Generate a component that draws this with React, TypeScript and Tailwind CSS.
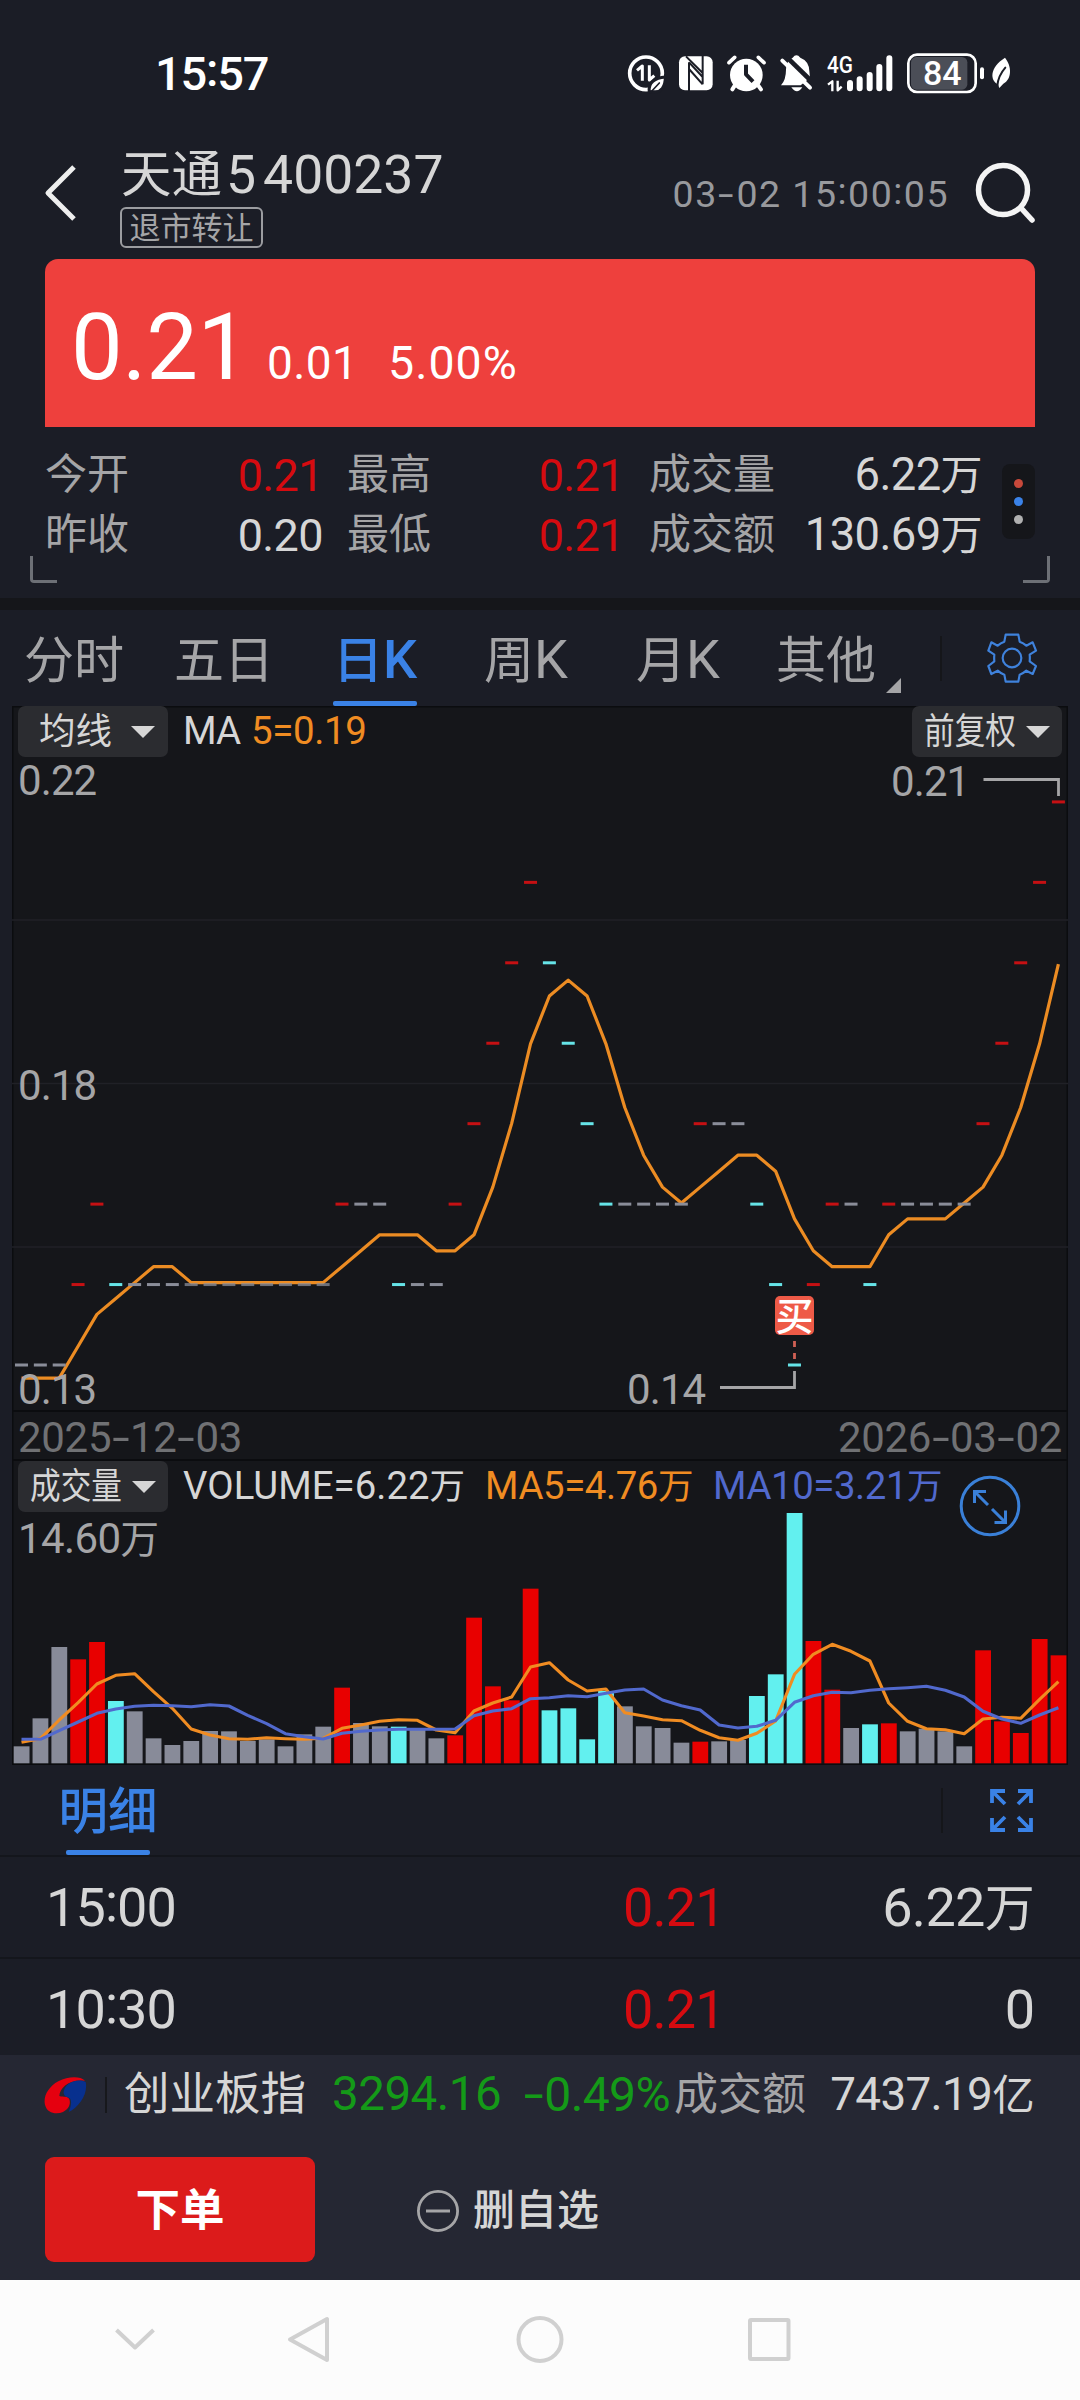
import React from "react";

/* ---------- text ---------- */

/** Mixed Latin / Chinese label: digits run slightly larger than the ideographs, colons are centred. */
function T({ s, className = "" }: { s: string; className?: string }) {
  const hasCjk = /[\u4e00-\u9fff]/.test(s);
  const runs = s.match(/[\u4e00-\u9fff]+|:|-|[^\u4e00-\u9fff:-]+/g) ?? [];
  return (
    <span className={"block whitespace-pre leading-none " + className}>
      {runs.map((r, i) => {
        if (r === ":")
          return (
            <span key={i} className="relative -top-[0.085em]">
              :
            </span>
          );
        if (r === "-")
          return (
            <span key={i} className="mx-[0.09em] inline-block scale-x-150">
              -
            </span>
          );
        if (/[\u4e00-\u9fff]/.test(r)) return <span key={i}>{r}</span>;
        return (
          <span key={i} className={hasCjk ? "text-[1.08em]" : ""}>
            {r}
          </span>
        );
      })}
    </span>
  );
}

/* ---------- status bar ---------- */

function StatusIcons() {
  const bg = "#1b1d26";
  return (
    <svg className="ml-[359px] h-[63px] w-[386px] shrink-0 overflow-visible" viewBox="79 35 1158 189" fill="none" stroke="#fff" strokeLinecap="round" strokeLinejoin="round">
      <circle cx="136" cy="129" r="49" strokeWidth="11" />
      <path d="M109 120L125 107V151M146 105V149L161 136" strokeWidth="9" strokeLinecap="butt" />
      <path d="M146 184C142 158 162 142 194 140C194 168 182 188 158 184Z" fill="#fff" stroke={bg} strokeWidth="9" />
      <path d="M148 188L176 158" stroke={bg} strokeWidth="5" />

      <rect x="235" y="78" width="101" height="102" rx="18" fill="#fff" stroke="none" />
      <path d="M265 96V184M306 74V162M256 78L306 128M265 96L306 140M265 116L306 162" stroke={bg} strokeWidth="6" strokeLinecap="butt" />

      <circle cx="437" cy="134" r="49" fill="#fff" stroke="none" />
      <path d="M385 97L402 81M473 81L490 97" strokeWidth="11" />
      <path d="M402 166L395 177M473 166L481 177" strokeWidth="12" />
      <path d="M436 103V132L457 154" stroke={bg} strokeWidth="12" strokeLinecap="butt" />

      <path d="M576 82Q587 68 599 82Q625 92 626 122L628 142L600 165H541Q556 148 556 118Q556 92 576 82Z" fill="#fff" stroke="none" />
      <path d="M556 78L644 164" stroke={bg} strokeWidth="14" strokeLinecap="butt" />
      <path d="M545 91L628 172" strokeWidth="12" />
      <path d="M572 171H605Q589 195 572 171Z" fill="#fff" stroke="none" />

      <text x="679" y="129" textLength="78" lengthAdjust="spacingAndGlyphs" fontSize="73" fontWeight="500" fill="#fff" stroke="none">
        4G
      </text>
      <path d="M682 163L695 153V183M711 151V180L723 169" strokeWidth="7" strokeLinecap="butt" />
      <path d="M748 158V174M777 147V174M807 134V174M836 110V174M866 84V174" strokeWidth="18" />

      <rect x="931" y="80" width="169" height="98" rx="16" fill="#4b4e57" stroke="none" />
      <rect x="923" y="73" width="202" height="112" rx="26" strokeWidth="8" />
      <text x="1025" y="165" textAnchor="middle" fontSize="102" fontWeight="500" fill="#fff" stroke="none">
        84
      </text>
      <path d="M1144 117V141" strokeWidth="12" />
      <path d="M1213 82C1234 108 1234 146 1208 160L1196 173L1192 162C1168 150 1166 112 1213 82Z" fill="#fff" stroke="none" />
      <path d="M1214 112C1200 128 1192 144 1190 166" stroke={bg} strokeWidth="6" />
    </svg>
  );
}

/* ---------- chart data ---------- */

const UP = "#c51013";
const DOWN = "#66e4e8";
const FLAT = "#8a8d99";

const levels = [
  14, 14, 14, 15, 16, 15, 15, 15, 15, 15, 15, 15, 15, 15, 15, 15, 15, 16, 16, 16, 15, 15, 15, 16, 17, 18, 19, 20, 19, 18, 17, 16, 16, 16,
  16, 16, 17, 17, 17, 16, 15, 14, 15, 16, 16, 15, 16, 16, 16, 16, 16, 17, 18, 19, 20, 21,
];
const barTops = [
  1039, 955, 741, 778, 726, 903, 934, 1015, 1035, 1023, 993, 994, 1023, 1018, 1039, 1003, 980, 863, 969, 979, 980, 989, 1015, 1006, 653, 859,
  901, 566, 931, 925, 1018, 873, 919, 979, 984, 1028, 1025, 1024, 1020, 888, 823, 339, 723, 869, 984, 973, 970, 994, 986, 994, 1039, 751, 964,
  999, 717, 766,
];
const volMa5 = [
  1027, 1016, 960, 908, 852, 826, 821, 875, 925, 987, 1005, 1016, 1018, 1013, 1016, 1018, 1015, 985, 975, 964, 959, 961, 990, 998, 933, 909,
  891, 801, 788, 840, 873, 867, 938, 948, 959, 962, 991, 1013, 1021, 1000, 963, 823, 763, 733, 754, 783, 909, 964, 986, 989, 1001, 957, 952,
  955, 898, 845,
];
const volMa10 = [
  1018, 1018, 992, 966, 940, 927, 919, 916, 917, 920, 914, 918, 946, 971, 1001, 1010, 1017, 1000, 994, 990, 988, 988, 988, 987, 947, 933, 926,
  896, 893, 887, 890, 880, 870, 867, 900, 917, 930, 975, 984, 979, 961, 907, 887, 877, 878, 871, 866, 863, 859, 871, 891, 934, 957, 970, 945,
  923,
];

const cx = (i: number) => 21.5 + i * 18.853;
const dir = (i: number) => (i === 0 ? 0 : Math.sign(levels[i] - levels[i - 1]));
const markY = (v: number) => 1365 - (v - 14) * 80.44;
const ma5 = levels.map((_, i) => {
  if (i < 3) return 13.8;
  if (i === 3) return 14.2;
  return levels.slice(i - 4, i + 1).reduce((a, b) => a + b, 0) / 5;
});
const maPoints = ma5.map((v, i) => `${cx(i).toFixed(1)},${(1282.6 - (v - 15) * 79.6).toFixed(1)}`).join(" ");
const volPoints = (a: number[]) => a.map((v, i) => `${cx(i).toFixed(1)},${(1400 + v / 3).toFixed(1)}`).join(" ");

function PriceChart() {
  return (
    <svg className="block h-[653px] w-full overflow-visible" viewBox="12 757 1056 653">
      {[920, 1083.5, 1247].map((y) => (
        <line key={y} x1="12" x2="1068" y1={y} y2={y} stroke="#202127" strokeWidth="1.5" />
      ))}
      <polyline points={maPoints} fill="none" stroke="#ec8c23" strokeWidth="3.2" strokeLinejoin="round" />
      {levels.map((v, i) => (
        <rect
          key={i}
          x={cx(i) - 6.5}
          y={markY(v) - 1.5}
          width="13"
          height="3"
          fill={dir(i) > 0 ? UP : dir(i) < 0 ? DOWN : FLAT}
          opacity={i > 8 && i < 17 ? 0.75 : 1}
        />
      ))}
      <g fill="#a5a5a7" fontSize="42" letterSpacing="-0.9">
        <text x="18" y="795">0.22</text>
        <text x="18" y="1099.5">0.18</text>
        <text x="18" y="1404">0.13</text>
        <text x="891" y="796">0.21</text>
        <text x="627" y="1404">0.14</text>
      </g>
      <path d="M983.5 779.5H1058.5V796M720 1387.5H794.5V1371" fill="none" stroke="#a5a5a7" strokeWidth="2.8" />
      <rect x="775" y="1296" width="39" height="39" rx="5" fill="#ee5a47" />
      <text x="794.5" y="1330" textAnchor="middle" fontSize="38" fontWeight="500" fill="#fff">
        买
      </text>
      <path d="M794.5 1341V1347M794.5 1353V1359" stroke="#cf6055" strokeWidth="2.8" />
    </svg>
  );
}

function VolumeChart() {
  return (
    <svg className="block h-[253px] w-full" viewBox="12 1512 1056 253">
      <text x="18" y="1552.5" fontSize="42" letterSpacing="-0.6" fill="#a5a5a7">
        14.60<tspan fontSize="38.5">万</tspan>
      </text>
      {barTops.map((v, i) => (
        <rect
          key={i}
          x={cx(i) - 7.8}
          y={1400 + v / 3}
          width="15.8"
          height={363.3 - v / 3}
          fill={dir(i) > 0 ? "#e80000" : dir(i) < 0 ? "#62f0ef" : "#888b99"}
        />
      ))}
      <polyline points={volPoints(volMa5)} fill="none" stroke="#f08c22" strokeWidth="3.1" strokeLinejoin="round" />
      <polyline points={volPoints(volMa10)} fill="none" stroke="#5169cd" strokeWidth="3.1" strokeLinejoin="round" />
    </svg>
  );
}

/* ---------- small parts ---------- */

function PickButton({ label, narrow, className = "" }: { label: string; narrow?: boolean; className?: string }) {
  return (
    <div className={"flex h-[51px] w-[150px] shrink-0 items-center rounded-[7px] bg-[#2b2c30] pt-[1px] text-[#d6d6d6] " + className}>
      {narrow ? (
        <div className="ml-[12px] w-[93px]">
          <T s={label} className="w-[108px] origin-left scale-x-[0.84] text-[36.5px]" />
        </div>
      ) : (
        <T s={label} className="ml-[21px] mr-[10px] text-[36.5px]" />
      )}
      <svg className="ml-[9px] h-[12px] w-[24px]" viewBox="0 0 24 12">
        <path d="M0 0H24L12 12Z" fill="#d6d6d6" />
      </svg>
    </div>
  );
}

function Gear() {
  return (
    <svg className="ml-[44px] h-[52px] w-[52px]" viewBox="345 36 156 156" fill="none" stroke="#3f82dc" strokeWidth="6.5" strokeLinejoin="round">
      <path d="M404 44H442L446 65Q457 69 466 77L485 67L495 92L476 104Q477 114 476 124L495 138L485 162L466 152Q457 160 446 164L442 185H404L400 164Q389 160 380 152L361 162L352 138L370 124Q369 114 370 104L352 92L361 67L380 77Q389 69 400 65Z" />
      <circle cx="423" cy="114" r="28" />
    </svg>
  );
}

function Logo() {
  return (
    <svg className="ml-[44px] h-[38px] w-[43px]" viewBox="43 38 129 114">
      <path d="M166 52C152 38 116 38 86 54C56 70 40 100 46 124C52 150 80 154 100 146C117 138 124 122 119 108C115 97 102 102 89 98C90 74 118 46 166 52Z" fill="#e5000f" />
      <path d="M168 56C142 44 112 58 104 78C98 92 105 100 114 102C128 105 126 124 117 146C148 132 176 92 168 56Z" fill="#08308e" />
    </svg>
  );
}

function StatRow({ items }: { items: [string, string, string][] }) {
  const widths = ["ml-[45px] w-[278px]", "ml-[24px] w-[277px]", "ml-[25px] w-[333px]"];
  return (
    <div className="flex h-[60px] items-center">
      {items.map(([label, value, color], i) => (
        <div key={label} className={"flex items-center justify-between " + widths[i]}>
          <T s={label} className="text-[42px] text-[#a5a5a7]" />
          <T s={value} className={(/万/.test(value) ? "text-[42px] tracking-[-0.6px] " : "text-[45px] tracking-[-0.6px] ") + color} />
        </div>
      ))}
    </div>
  );
}

/* ---------- page ---------- */

const RED = "text-[#d60b10]";
const LIGHT = "text-[#d6d6d6]";

export default function App() {
  return (
    <div className="flex h-[2400px] w-[1080px] flex-col overflow-hidden bg-[#1b1d26] font-[Roboto,'Noto_Sans_CJK_SC',sans-serif] text-[#d6d6d6]">
      {/* status bar */}
      <div className="flex h-[146px] shrink-0 items-center">
        <T s="15:57" className="ml-[155px] w-[113px] text-[47px] font-medium tracking-[-1.2px] text-white" />
        <StatusIcons />
      </div>

      {/* header */}
      <div className="flex h-[113px] shrink-0">
        <svg className="ml-[41px] mt-[18px] h-[58px] w-[38px]" viewBox="0 0 38 58" fill="none" stroke="#eee" strokeWidth="5">
          <path d="M33 3L7 29L33 55" strokeLinejoin="round" />
        </svg>
        <div className="ml-[41px] w-[400px]">
          <div className="flex h-[56px] items-center pt-[2px]">
            <T s="天通" className="ml-[1px] text-[50.5px]" />
            <T s="5" className="ml-[4px] text-[53.5px]" />
            <T s="400237" className="ml-[7px] text-[53.5px]" />
          </div>
          <div className="mt-[5px] flex h-[41px] w-[143px] items-center justify-center rounded-[6px] border-2 border-[#9b9ca0] pt-[1px]">
            <T s="退市转让" className="text-[31px] text-[#a5a5a7]" />
          </div>
        </div>
        <div className="ml-auto mt-[21px] flex h-[56px] items-center">
          <T s="03-02 15:00:05" className="text-[37.5px] tracking-[1.5px] text-[#98999d]" />
        </div>
        <svg className="ml-[21px] mr-[42px] mt-[13px] h-[68px] w-[68px]" viewBox="0 0 68 68" fill="none" stroke="#f4f4f4" strokeWidth="5.5" strokeLinecap="round">
          <circle cx="33" cy="31" r="24.5" />
          <path d="M51 49L62 61" />
        </svg>
      </div>

      {/* price card */}
      <div className="mx-[45px] flex h-[168px] shrink-0 items-baseline rounded-t-[13px] bg-[#ee403d] pt-[43px] text-white">
        <T s="0.21" className="ml-[26px] w-[167px] text-[92px] tracking-[-0.4px]" />
        <T s="0.01" className="ml-[29px] w-[90px] text-[46px] tracking-[0.4px]" />
        <T s="5.00%" className="ml-[31px] text-[46.5px] tracking-[1px]" />
      </div>

      {/* summary */}
      <div className="relative h-[171px] shrink-0 pt-[18px]">
        <div className="flex">
          <div>
            <StatRow
              items={[
                ["今开", "0.21", RED],
                ["最高", "0.21", RED],
                ["成交量", "6.22万", LIGHT],
              ]}
            />
            <StatRow
              items={[
                ["昨收", "0.20", LIGHT],
                ["最低", "0.21", RED],
                ["成交额", "130.69万", LIGHT],
              ]}
            />
          </div>
          <div className="ml-[20px] mt-[19px] flex h-[75px] w-[33px] flex-col items-center justify-center gap-[9px] rounded-[8px] bg-[#15161a]">
            <div className="size-[9px] rounded-full bg-[#c8493b]" />
            <div className="size-[9px] rounded-full bg-[#3a82e8]" />
            <div className="size-[9px] rounded-full bg-[#b0b0b0]" />
          </div>
        </div>
        <div className="absolute left-[30px] top-[129px] h-[27px] w-[27px] rounded-bl-[4px] border-b-[3px] border-l-[3px] border-[#6d7076]" />
        <div className="absolute right-[30px] top-[129px] h-[27px] w-[27px] rounded-br-[4px] border-b-[3px] border-r-[3px] border-[#6d7076]" />
      </div>
      <div className="h-[12px] shrink-0 bg-[#15161a]" />

      {/* period tabs */}
      <div className="flex h-[96px] shrink-0 items-center text-[50px] text-[#a5a5a7]">
        <T s="分时" className="ml-[24px] mt-[5px] w-[101px]" />
        <T s="五日" className="ml-[49px] mt-[5px] w-[101px]" />
        <div className="relative ml-[58px] flex h-full w-[84px] items-center justify-center text-[#3a82e6]">
          <T s="日K" className="mt-[4px] font-medium" />
          <div className="absolute bottom-0 h-[5px] w-[84px] rounded-[2px] bg-[#3a82e6]" />
        </div>
        <T s="周K" className="ml-[67px] mt-[4px] w-[90px]" />
        <T s="月K" className="ml-[62px] mt-[4px] w-[90px]" />
        <T s="其他" className="ml-[50px] mt-[5px] w-[101px]" />
        <svg className="ml-[9px] mt-[54px] h-[15px] w-[15px]" viewBox="0 0 15 15">
          <path d="M15 0V15H0Z" fill="#a5a5a7" />
        </svg>
        <div className="ml-[39px] h-[45px] w-[2px] bg-[#15161a]" />
        <Gear />
      </div>

      {/* charts */}
      <div className="relative mx-[12px] h-[1059px] shrink-0 bg-[#15161a] shadow-[inset_0_0_0_1.5px_#0b0c0f]">
        <div className="flex h-[51px] items-center">
          <PickButton label="均线" className="ml-[6px]" />
          <T s="MA" className="ml-[15px] w-[59px] text-[38.5px] tracking-[-1px]" />
          <T s="5=0.19" className="ml-[9px] mt-[-1px] text-[38.5px] tracking-[-0.4px] text-[#f08c22]" />
          <PickButton label="前复权" narrow className="ml-auto mr-[6px]" />
        </div>
        <PriceChart />
        <div className="flex h-[51px] items-center justify-between border-y-2 border-[#0b0c0f] pl-[6px] pr-[6px] pt-[4px] text-[42px] tracking-[-0.3px] text-[#707174]">
          <T s="2025-12-03" />
          <T s="2026-03-02" />
        </div>
        <div className="flex h-[51px] items-center">
          <PickButton label="成交量" narrow className="ml-[6px]" />
          <T s="VOLUME=6.22万" className="ml-[15px] w-[282px] text-[35.5px] tracking-[0.05px]" />
          <T s="MA5=4.76万" className="ml-[20px] w-[208px] text-[35.5px] tracking-[-0.4px] text-[#f08c22]" />
          <T s="MA10=3.21万" className="ml-[20px] text-[35.5px] tracking-[-0.4px] text-[#5169cd]" />
        </div>
        <VolumeChart />
        <svg className="absolute right-[46px] top-[768px] h-[64px] w-[64px]" viewBox="0 0 64 64" fill="none" stroke="#3a80d8" strokeWidth="3">
          <circle cx="32" cy="32" r="28.8" />
          <path d="M16.5 29V17.5H28M17 18L30 31M34 35L47 48M36.5 48.5H47.5V36.5" />
        </svg>
      </div>

      {/* trade details */}
      <div className="flex h-[92px] shrink-0 items-center border-b-2 border-[#14161c]">
        <div className="relative ml-[59px] flex h-full w-[98px] items-center justify-center text-[#3a82e6]">
          <T s="明细" className="mt-[5px] text-[49.5px] font-medium" />
          <div className="absolute bottom-0 h-[5px] w-[84px] rounded-[2px] bg-[#3a82e6]" />
        </div>
        <div className="ml-[784px] h-[45px] w-[2px] bg-[#15161a]" />
        <svg className="ml-[45px] h-[46px] w-[46px]" viewBox="0 0 46 46" fill="none" stroke="#3a82e6" strokeWidth="3.8">
          <path d="M4 16V4H17M4 4L17 17M30 4H43V16M43 4L30 17M4 31V43H17M4 43L17 30M30 43H43V31M43 43L30 30" />
        </svg>
      </div>
      <div className="flex h-[102px] shrink-0 items-center border-b-2 border-[#14161c] pt-[2px]">
        <T s="15:00" className="ml-[46px] w-[577px] text-[54px] tracking-[-0.9px]" />
        <T s="0.21" className="text-[54px] tracking-[-0.9px] text-[#d60b10]" />
        <T s="6.22万" className="ml-auto mr-[46px] text-[50px] tracking-[-0.7px]" />
      </div>
      <div className="flex h-[96px] shrink-0 items-center pt-[6px]">
        <T s="10:30" className="ml-[46px] w-[577px] text-[54px] tracking-[-0.9px]" />
        <T s="0.21" className="text-[54px] tracking-[-0.9px] text-[#d60b10]" />
        <T s="0" className="ml-auto mr-[45px] text-[54px]" />
      </div>

      {/* bottom panel */}
      <div className="h-[225px] shrink-0 bg-[#252733]">
        <div className="flex h-[78px] items-center pt-[1px]">
          <Logo />
          <div className="ml-[18px] h-[36px] w-[2px] bg-[#17181c]" />
          <T s="创业板指" className="ml-[17px] w-[182px] text-[45.5px]" />
          <T s="3294.16" className="ml-[26px] w-[167px] text-[47.5px] tracking-[-0.5px] text-[#149a18]" />
          <T s="-0.49%" className="ml-[24px] w-[149px] text-[48px] tracking-[-0.6px] text-[#149a18]" />
          <T s="成交额" className="ml-[2px] w-[132px] text-[44px] text-[#a5a5a7]" />
          <T s="7437.19亿" className="ml-auto mr-[46px] text-[42.5px] tracking-[-0.7px]" />
        </div>
        <div className="mt-[24px] flex h-[105px] items-center">
          <div className="ml-[45px] flex h-[105px] w-[270px] items-center justify-center rounded-[9px] bg-[#dc1b1b] pt-[3px] text-white">
            <T s="下单" className="text-[44.5px] font-bold" />
          </div>
          <svg className="ml-[101px] mt-[2px] h-[44px] w-[44px]" viewBox="0 0 44 44" fill="none" stroke="#a5a5a7" strokeWidth="2.8">
            <circle cx="22" cy="22" r="19.6" />
            <path d="M10 22H34" strokeWidth="3" />
          </svg>
          <T s="删自选" className="ml-[13px] mt-[3px] text-[42px] font-medium" />
        </div>
      </div>

      {/* system navigation */}
      <div className="h-[120px] shrink-0 bg-[#fcfcfc]">
        <svg className="h-[120px] w-[1080px]" viewBox="0 2280 1080 120" fill="none" stroke="#d0d0d0" strokeWidth="4" strokeLinejoin="round">
          <path d="M116.500 2330L135 2347.500L153.500 2330" />
          <path d="M327 2319V2360L290 2339.500Z" />
          <circle cx="540" cy="2339.500" r="21.500" />
          <rect x="750" y="2320" width="38.500" height="39" rx="1" />
        </svg>
      </div>
    </div>
  );
}
